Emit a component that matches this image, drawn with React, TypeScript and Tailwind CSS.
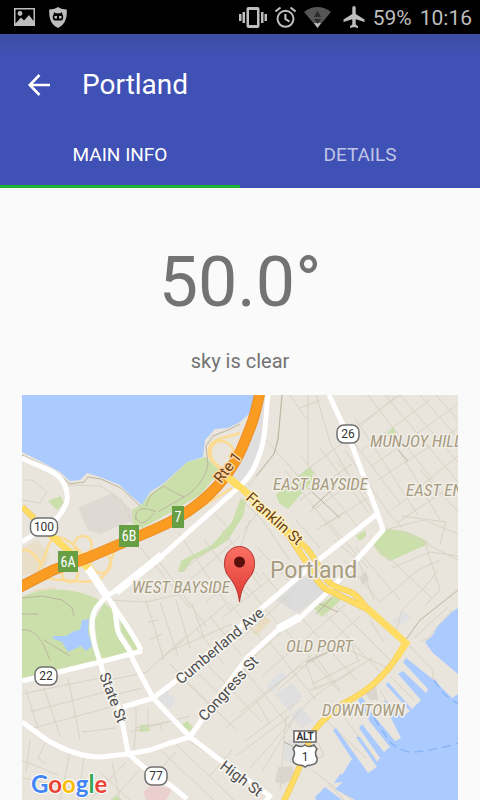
import type { ReactNode } from "react";

const tabs = ["MAIN INFO", "DETAILS"];

const minorStreets = [
  // east bayside and munjoy hill
  "M282 395 L279 430 L275 452 L262 470 L248 486",
  "M308 395 V466",
  "M316 395 L331 445 L352 480 L372 510",
  "M290 395 L306 418 M300 408 L321 400 M266 440 L300 478",
  "M338 440 L400 395 M356 430 L396 396 M362 450 L430 400 M372 466 L458 404 M378 480 L458 428",
  "M385 395 L458 482 M400 395 L458 462 M420 395 L458 438 M368 395 L440 490 M355 418 L418 515",
  "M392 510 L458 456 M398 522 L458 482 M352 440 L400 503 M345 450 L388 512 M436 395 L458 420",
  "M296 478 L344 442 M300 500 L352 464 M310 512 L362 476 M324 526 L374 494 M285 470 L340 540",
  "M300 455 L360 530 M320 448 L368 512 M337 462 L366 494",
  "M420 470 L458 512 M396 445 L440 520 M400 530 L458 560 M388 512 L402 528",
  // behind the bay front
  "M22 480 L32 480 L47 492 L40 503 L22 500",
  "M67 485 L100 486 L122 500 L132 524",
  "M213 511 L226 526 M240 498 L262 520 L290 560 M250 520 L240 548 M262 508 L244 530",
  // west bayside
  "M140 547 L190 608 M158 560 L206 626 M178 532 L232 612 M204 540 L250 598 M222 530 L262 580",
  "M109 600 L146 602 L180 594 M146 600 L164 660 M160 602 L178 656 M176 600 L190 648 M192 604 L204 638",
  "M148 622 L158 620 M150 640 L162 634 M160 660 L225 605 M146 672 L188 634 M172 650 L232 624",
  "M190 580 L240 536 M206 602 L262 556 M222 618 L278 572 M240 640 L296 588 M180 572 L212 548",
  "M196 628 L224 664 M210 616 L242 656 M228 602 L262 640 M246 586 L280 626 M262 572 L292 608",
  "M186 682 L214 710 M170 664 L236 730 M196 672 L226 700 M205 662 L262 722",
  // left neighbourhood
  "M26 690 L38 728 M44 688 L60 736 M68 678 L80 740 M82 732 L116 728 M22 694 L100 678",
  "M30 712 L112 690 M34 728 L114 706 M110 680 L148 672 M118 694 L142 688",
  "M136 708 V728 L178 720 M136 728 L134 750 M148 708 V724 M160 724 L162 731 M130 732 L190 716",
  "M22 760 L58 775 M30 740 L26 772 M46 742 L38 758 L46 764 M70 752 L60 800 M84 757 L78 800",
  "M22 778 L100 794 M100 772 L130 800 M112 762 L120 800 M126 762 L90 800 M140 770 L112 800",
  "M160 750 L214 800 M176 744 L234 800 M150 780 L176 752 M190 742 L244 776 M210 776 L232 750",
  // old port and downtown
  "M246 664 L286 628 L330 594 M262 676 L346 604 M278 690 L360 616 M240 712 L300 666 M226 728 L312 655",
  "M268 640 L316 700 M284 628 L340 692 M300 616 L356 680 M318 606 L380 672 M336 606 L394 664",
  "M300 668 L340 646 L388 668 M312 684 L360 660 M244 742 L300 700 M236 756 L290 716 M286 716 L280 790",
  "M240 664 L300 740 M256 700 L270 724 M262 772 L298 712 M250 768 L310 700 L354 668",
  "M306 664 L316 690 L326 684 M348 636 L358 660 M370 620 L384 642 M318 660 L340 690",
  "M326 720 L366 758 M340 712 L378 762 M380 690 L398 720 M390 676 L414 700 M310 690 L342 678 L372 658",
  "M240 560 L262 588 M258 548 L288 580 M296 520 L320 548 M334 540 L358 560 L374 600",
  "M344 560 L380 602 M356 548 L400 600 M370 540 L432 598 M392 568 L430 552 L458 556",
  "M380 602 L418 570 L440 560 M396 632 L402 610 L424 588 L438 570 M424 540 L440 590 L425 606",
  "M330 524 L368 568 M316 530 L344 512 M384 530 L424 520 L458 534 M402 516 L446 522 L440 544",
  "M420 642 L428 638 L452 610 M414 638 L448 607 M405 644 L412 648 L433 670 L433 680",
  "M310 760 L324 756 L318 742 M312 770 L352 800 M328 783 L344 800",
];

const whiteRoads = [
  "M22 458 C36 466 58 470 64 484 C70 496 68 506 57 518 L40 532",
  "M22 542 L38 532",
  "M268 395 C265 420 266 440 258 458 C254 472 246 480 238 488 L193 528 L163 555 L120 588 C114 592 110 595 105 595",
  "M84 565 C92 574 98 582 107 596 C118 614 130 628 141 650",
  "M107 596 C94 608 91 614 92 630 C94 650 99 654 103 673 L120 710 L128 753 C140 765 154 776 170 785 L187 799",
  "M112 602 C118 614 114 626 120 636 C128 648 131 652 133 660 L153 698 L190 737 L220 760 L270 796 L264 803",
  "M22 681 L100 662 L142 651",
  "M123 707 L153 698 L177 680 L262 608 L316 562 L377 514",
  "M190 737 L203 718 L247 658 L280 628 L300 618 L330 590 L384 529",
  "M329 395 L350 440 L377 512 L383 530",
  "M22 722 L47 740 Q76 757 100 757 L128 754 L150 750 L170 743 L190 737",
];

const yellowRoads = [
  "M22 507 L34 518 M40 526 L88 568",
  "M227 477 L242 489 L283 527 L307 563 C314 576 320 588 332 592 L367 609 L406 643 L395 660 C374 690 352 698 340 706 C320 722 312 730 307 747 L297 773 L284 801",
  "M283 527 L303 545 C312 552 314 560 320 568 C330 592 342 586 354 594 C362 600 364 606 368 609",
];

const ramps = [
  "M240 433 C226 438 214 438 210 446 C204 460 218 466 229 476",
  "M229 468 C238 456 234 443 222 441 C210 441 208 454 214 462 L226 473",
  "M232 488 L205 505 L192 512",
  "M74 545 A9 9 0 1 1 92 545 A9 9 0 1 1 74 545",
  "M91 563 A10 10 0 1 1 111 563 A10 10 0 1 1 91 563",
  "M62 574 A8 8 0 1 1 78 574 A8 8 0 1 1 62 574",
  "M38 570 C48 556 46 538 58 537 C66 538 74 544 84 556",
  "M34 578 C60 578 78 584 94 581 C114 576 108 554 118 548 L142 530",
  "M22 550 C30 548 36 556 42 566",
];

const mainHighway = "M18 588 L53 570 L87 558 L120 544 L153 530 C196 512 226 484 242 448 C252 424 254 420 260 392";

const parks = [
  "M132 510 L142 504 L150 494 L163 485 L187 462 L206 457 L220 471 L200 495 L173 511 L142 528 L133 524 Z",
  "M22 597 C50 584 80 590 99 600 L92 618 L93 640 L98 660 L22 678 Z",
  "M104 603 L114 611 L117 634 L128 649 L130 654 L99 659 L96 634 L95 620 Z",
  "M120 615 L126 622 L139 650 L134 651 L121 632 Z",
  "M276 494 L309 467 L314 472 L310 484 L288 509 L279 503 Z",
  "M384 531 L390 529 L408 532 L427 541 L428 544 L390 561 L380 554 L373 545 Z",
  "M314 608 L333 596 L341 600 L322 617 Z",
  "M48 501 L61 496 L64 503 L57 510 Z",
  "M140 725 L149 724 L150 731 L139 732 Z",
  "M182 725 L187 721 L193 727 L190 731 Z",
  "M240 500 L247 498 L243 516 L228 540 L216 548 L192 560 L184 572 L178 572 L181 561 L212 545 L232 522 Z",
  "M387 434 L393 427 L396 432 L393 438 Z M356 536 L366 530 L366 536 L360 541 Z",
  "M110 800 L116 795 L122 800 Z",
];

const gray = [
  { d: "M78 508 L112 493 L130 508 L134 520 L100 534 L88 530 Z", fill: "#dfd9d3" },
  { d: "M276 601 L303 576 L330 588 L298 613 Z", fill: "#dcdcdc" },
  { d: "M275 695 L292 683 L302 696 L290 712 Z M290 716 L300 706 L314 722 L302 728 Z M284 742 L296 738 L316 756 L308 770 L284 760 Z", fill: "#dfdfdf" },
  { d: "M266 686 L280 672 L288 676 L272 692 Z M158 700 L166 690 L176 701 L170 708 Z M392 622 L402 612 L412 616 L402 624 Z", fill: "#dfe0e2" },
  { d: "M278 767 L292 766 L296 777 L284 784 L275 782 Z M360 577 L366 571 L369 580 L362 585 Z M363 690 L376 684 L378 700 L370 700 Z", fill: "#dcd5ce" },
  { d: "M143 792 L152 785 L172 789 L166 800 H146 Z", fill: "#ebcfcf" },
  { d: "M252 633 L264 615 L271 621 L257 635 Z M34 590 L56 587 L58 594 L38 598 Z", fill: "#e9dcc0" },
  { d: "M22 548 L38 540 L50 556 L44 570 L22 576 Z", fill: "#e9dfc8" },
];

const areas = [
  { x: 370, y: 447, text: "MUNJOY HILL" },
  { x: 273, y: 490, text: "EAST BAYSIDE" },
  { x: 406, y: 496, text: "EAST EN" },
  { x: 132, y: 593, text: "WEST BAYSIDE" },
  { x: 286, y: 652, text: "OLD PORT" },
  { x: 322, y: 716, text: "DOWNTOWN" },
];

const streets = [
  { x: 181, y: 685, angle: -40, text: "Cumberland Ave" },
  { x: 205, y: 722, angle: -48, text: "Congress St" },
  { x: 99, y: 675, angle: 69, text: "State St" },
  { x: 219, y: 768, angle: 37, text: "High St" },
];

const exits = [
  { x: 58, y: 551, w: 20, h: 21, text: "6A" },
  { x: 119, y: 525, w: 20, h: 22, text: "6B" },
  { x: 172, y: 506, w: 12, h: 22, text: "7" },
];

const shields = [
  { x: 44, y: 527, w: 27, text: "100" },
  { x: 348, y: 434, w: 22, text: "26" },
  { x: 46, y: 676, w: 22, text: "22" },
  { x: 156, y: 776, w: 22, text: "77" },
];

function Icon({ className, box, children }: { className: string; box: string; children: ReactNode }) {
  return (
    <svg className={className} viewBox={box} fill="currentColor" aria-hidden="true">
      {children}
    </svg>
  );
}

function StatusBar() {
  return (
    <div className="flex h-[34px] items-center justify-between bg-black pr-2 pl-3.5 text-[21px] leading-none text-[#bebebe]">
      <div className="flex items-center gap-3.5">
        <Icon className="h-[18px] w-[21px]" box="0 0 21 18">
          <path fillRule="evenodd" d="M0 0H21V18H0Z M1.5 1.5V15.5L7 9.5L10 12.5L15 7L19.5 13V1.5Z" />
          <circle cx="6" cy="5.5" r="2.4" />
        </Icon>
        <Icon className="h-[21px] w-[18px]" box="0 0 18 21">
          <path d="M9 0C12 2 15 2.4 17.7 2.4C18.4 12 15.5 18 9 21C2.5 18 -.4 12 .3 2.4C3 2.4 6 2 9 0Z" />
          <path fill="#000" d="M5 5L6.5 6.3H11.5L13 5L13.4 7.5C14.8 9 14.4 13 12.5 13.5H5.5C3.600 13 3.200 9 4.600 7.500Z" />
          <path d="M5.500 9H8V11.500H5.500Z M10 9H12.500V11.500H10Z" />
        </Icon>
      </div>
      <div className="flex items-center gap-2">
        <Icon className="h-[21px] w-[28px]" box="0 0 28 21">
          <path fillRule="evenodd" d="M9.500 0H18.500Q20.500 0 20.500 2V19Q20.500 21 18.500 21H9.500Q7.500 21 7.500 19V2Q7.500 0 9.500 0Z M10 3V18H18V3Z" />
          <path d="M0 7H2.500V14H0Z M3.500 5H6V16H3.500Z M22 5H24.500V16H22Z M25.500 7H28V14H25.500Z" />
        </Icon>
        <Icon className="h-[21px] w-[21px]" box="0 0 21 21">
          <circle cx="10.5" cy="11.8" r="8" fill="none" stroke="currentColor" strokeWidth="2" />
          <path d="M9.300 7H11.500V11.500L15 13.700L14 15.500L9.300 12.600Z" />
          <path d="M.5 4.500L5.500 .5M20.500 4.500L15.500 .5" fill="none" stroke="currentColor" strokeWidth="2" />
        </Icon>
        <Icon className="h-[21px] w-[27px]" box="0 0 27 21">
          <path fill="#555" d="M0 5C8 -1.600 19 -1.600 27 5L13.500 21Z" />
          <path d="M10 16H17L13.500 21Z" />
          <path fill="#2c2c2c" d="M13.500 3.500L17 10H10Z M10 12H17L13.500 17Z" />
        </Icon>
        <Icon className="ml-1 h-[22px] w-[22px]" box="0 0 22 22">
          <path d="M11 0Q12.700 0 12.700 2V8L21.500 13.500V16L12.700 13.200V18.500L15 20.200V22L11 21L7 22V20.200L9.300 18.500V13.200L.5 16V13.500L9.300 8V2Q9.300 0 11 0Z" />
        </Icon>
        <span className="pt-0.5">59%</span>
        <span className="pt-0.5">10:16</span>
      </div>
    </div>
  );
}

function Header() {
  return (
    <header className="bg-linear-to-b from-[#3d4da3] to-[#3f51b5] to-15% pt-3.5 text-white">
      <div className="flex h-[74px] items-center">
        <button type="button" aria-label="Back" className="mr-8 ml-7">
          <svg className="size-[22px]" viewBox="0 0 22 22" fill="none" stroke="currentColor" strokeWidth="2.6">
            <path d="M11.500 1L1.800 11L11.500 21M1.500 11H22" />
          </svg>
        </button>
        <h1 className="text-[28px]">Portland</h1>
      </div>
      <nav className="grid grid-cols-2" role="tablist">
        {tabs.map((tab, i) => (
          <button
            key={tab}
            type="button"
            role="tab"
            aria-selected={i === 0}
            className={
              i === 0
                ? "h-[66px] border-b-3 border-[#1eb434] pt-1 text-[19px]"
                : "h-[66px] border-b-3 border-transparent pt-1 text-[19px] text-[#c0c5e7]"
            }
          >
            {tab}
          </button>
        ))}
      </nav>
    </header>
  );
}

function CityMap() {
  return (
    <svg
      className="h-auto w-full"
      viewBox="22 395 436 405"
      role="img"
      aria-label="Map of Portland"
      fontFamily="Roboto, sans-serif"
    >
      <rect x="22" y="395" width="436" height="405" fill="#e9e5dc" />

      {gray.map((g) => (
        <path key={g.d} d={g.d} fill={g.fill} />
      ))}
      <path d="M264 395 L266 440 L240 486 L226 476 L250 440 Z" fill="#dfdfdf" />
      <path d={parks.join(" ")} fill="#cadfaa" />
      <path d={minorStreets.join(" ")} fill="none" stroke="#d9d3c5" strokeWidth="1" />
      <path
        d="M22 455 L45 466 L62 477 L70 484 L84 482 L88 477 L101 479 L121 488 L140 506 M240 424 L228 430 L213 436 L206 446 L208 464 M208 464 C206 474 200 488 184 497 C176 494 168 488 163 486 L150 496 L146 506 M136 520 C134 508 144 506 156 512 M136 518 C142 528 148 520 154 513 M184 497 L158 512 M22 598 L42 596 L62 600 L72 608 L74 616 M22 630 C38 628 44 646 50 660 M22 614 H38 M44 640 L70 656 M282 395 L278 440 L274 454 L256 476 M308 488 L340 518 M312 508 L336 486 M398 450 L408 461 M405 641 L420 620 L458 590 M306 662 L332 650 M284 742 L300 750 M318 603 L338 612 M316 614 L332 598"
        fill="none"
        stroke="#bdb4a0"
        strokeWidth="1"
      />

      {/* bay and harbour */}
      <path
        d="M22 395 H256 L251 412 L240 422 L228 428 L215 429 L205 440 L203 457 L187 462 L163 484 L150 492 L142 505 L130 495 L120 485 L100 477 L87 473 L80 480 L70 481 L60 472 L40 461 L22 452 Z"
        fill="#abcbff"
      />
      <path d="M458 608 L453 611 L437 627 L433 635 L425 642 L432 652 L458 674 Z" fill="#abcbff" />
      <path
        d="M458 694 L452 698 L435 681 L430 677 L406 658 L403 662 L428 689 L426 693 L403 671 L398 674 L421 700 L412 709 L388 682 L386 685 L410 711 L405 715 L384 700 L386 708 L401 738 L395 741 L374 716 L362 697 L358 700 L370 722 L390 747 L384 752 L362 724 L359 728 L380 758 L377 762 L360 737 L356 737 L377 767 L368 773 L336 728 L333 730 L352 759 L342 775 L357 779 L340 774 L334 783 L343 782 L335 789 L355 800 H458 Z"
        fill="#abcbff"
      />
      <path
        d="M315 797 L325 787 L342 800 H316 Z M82 620 L89 619 L88 632 L92 646 L86 651 L81 646 L68 652 L62 642 L52 638 L54 636 L66 636 L74 631 L80 630 Z"
        fill="#abcbff"
      />
      <path
        d="M374 718 L390 742 Q398 750 410 752 Q434 751 458 743 M434 680 L444 694 L458 704"
        fill="none"
        stroke="#8ab4f8"
        strokeWidth="1.5"
        strokeDasharray="9 5"
      />

      {/* roads */}
      <path d={ramps.join(" ")} fill="none" stroke="#fcdc94" strokeWidth="2.5" />
      <path d={whiteRoads.join(" ")} fill="none" stroke="#fff" strokeWidth="5" strokeLinejoin="round" />
      <path d="M162 555 L116 592 M278 629 L300 617 M88 568 L108 598" fill="none" stroke="#fff" strokeWidth="8" />
      <path d={yellowRoads.join(" ")} fill="none" stroke="#f0c650" strokeWidth="6" strokeLinejoin="round" />
      <path d={yellowRoads.join(" ")} fill="none" stroke="#ffdc63" strokeWidth="5" strokeLinejoin="round" />
      <path d="M226 475 L246 492 L282 527 M368 609 L406 643 L397 657 M44 529 L88 568" fill="none" stroke="#ffdc63" strokeWidth="7" />
      <path d={mainHighway} fill="none" stroke="#ea8f28" strokeWidth="11" />
      <path d={mainHighway} fill="none" stroke="#fb9c22" strokeWidth="9" />
      <path d="M227 477 L238 486" stroke="#ffdc63" strokeWidth="7" />

      {/* place names */}
      <g fill="#a79b80" stroke="#f2efe9" strokeWidth="3" strokeLinejoin="round" paintOrder="stroke">
        {areas.map((a) => (
          <text key={a.text} x={a.x} y={a.y} fontSize="17" fontStyle="italic" fontFamily="'Roboto Condensed', Roboto, sans-serif">
            {a.text}
          </text>
        ))}
        <text x="270" y="578" fontSize="23">
          Portland
        </text>
      </g>

      <g fill="#4c4c4c" stroke="#f7f5f1" strokeWidth="3" strokeLinejoin="round" paintOrder="stroke" fontSize="15">
        {streets.map((s) => (
          <text key={s.text} transform={`translate(${s.x} ${s.y}) rotate(${s.angle})`}>
            {s.text}
          </text>
        ))}
      </g>
      <g fill="#6b3d12" strokeWidth="3" strokeLinejoin="round" paintOrder="stroke" fontSize="15">
        <text transform="translate(221 484) rotate(-52)" stroke="#ffd5a0">
          Rte 1
        </text>
        <text transform="translate(245 499) rotate(42)" stroke="#fff0b8">
          Franklin St
        </text>
      </g>

      {exits.map((e) => (
        <g key={e.text}>
          <rect x={e.x} y={e.y} width={e.w} height={e.h} fill="#689f45" />
          <text x={e.x + e.w / 2} y={e.y + 16} fontSize="14" fill="#fff" textAnchor="middle" fontFamily="'Roboto Condensed', Roboto, sans-serif">
            {e.text}
          </text>
        </g>
      ))}

      {shields.map((s) => (
        <g key={s.text}>
          <rect x={s.x - s.w / 2} y={s.y - 9} width={s.w} height="18" rx="7" fill="#fff" stroke="#707070" strokeWidth="1.5" />
          <text x={s.x} y={s.y + 4} fontSize="12" fill="#333" textAnchor="middle">
            {s.text}
          </text>
        </g>
      ))}

      <rect x="294" y="731" width="22" height="11" fill="#fff" stroke="#666" strokeWidth="1.5" />
      <text x="305" y="740" fontSize="10" fontWeight="700" fill="#333" textAnchor="middle">
        ALT
      </text>
      <path
        d="M296 745 Q301 748 305 745 Q309 748 314 745 L317 749 Q314 753 317 758 Q318 764 311 765 Q307 765 305 767 Q303 765 299 765 Q292 764 293 758 Q296 753 293 749 Z"
        fill="#fff"
        stroke="#666"
        strokeWidth="1.5"
      />
      <text x="305" y="761" fontSize="12" fill="#333" textAnchor="middle">
        1
      </text>

      {/* marker */}
      <path
        d="M239.5 602 C238 588 233 582 227 574 C221 562 226 547 239.5 546.5 C253 547 258 562 252 574 C246 582 241 588 239.5 602 Z"
        fill="url(#pin)"
        stroke="#b4312c"
        strokeWidth="1"
      />
      <circle cx="239.5" cy="562" r="5.5" fill="#5a100d" />
      <defs>
        <linearGradient id="pin" x1="0" y1="0" x2="0" y2="1">
          <stop offset="0" stopColor="#fb7064" />
          <stop offset="1" stopColor="#dd3a32" />
        </linearGradient>
      </defs>

      <text
        x="31"
        y="793"
        fontSize="24"
        fontWeight="700"
        fontFamily="Lato, sans-serif"
        stroke="#fff"
        strokeWidth="2"
        paintOrder="stroke"
      >
        <tspan fill="#4285f4">G</tspan>
        <tspan fill="#ea4335">o</tspan>
        <tspan fill="#fbbc05">o</tspan>
        <tspan fill="#4285f4">g</tspan>
        <tspan fill="#34a853">l</tspan>
        <tspan fill="#ea4335">e</tspan>
      </text>
    </svg>
  );
}

export default function App() {
  return (
    <div className="min-h-screen bg-[#fafafa] font-[Roboto,sans-serif]">
      <StatusBar />
      <Header />
      <main className="px-[22px] text-center text-[#737373]">
        <p className="pt-14 text-[70px] leading-[76px]">50.0°</p>
        <p className="pt-[26px] pb-[18px] text-xl leading-[31px]">sky is clear</p>
        <CityMap />
      </main>
    </div>
  );
}
